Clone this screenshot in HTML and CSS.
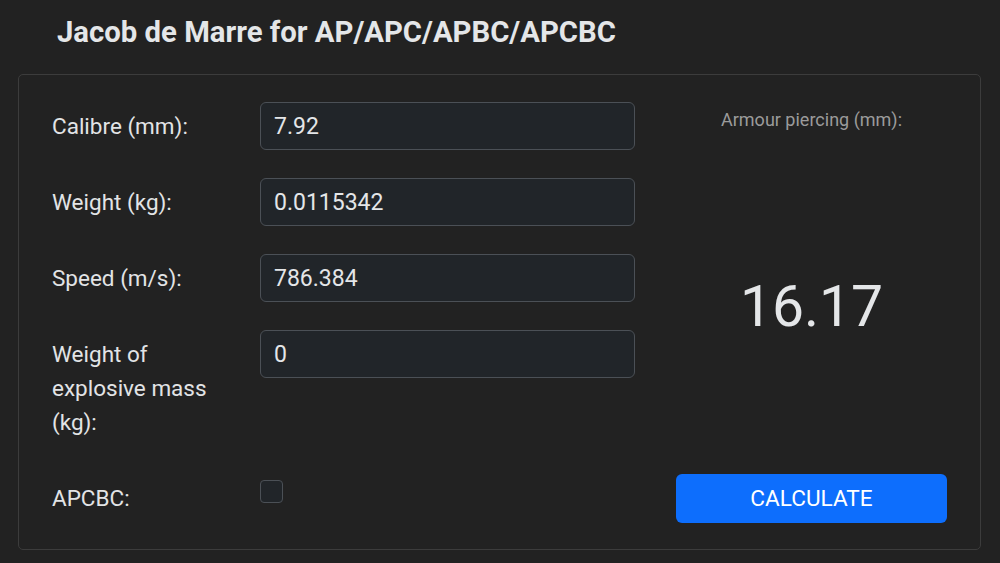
FILE: index.html
```html
<!DOCTYPE html>
<html>
<head>
<meta charset="utf-8">
<link rel="stylesheet" href="styles.css">
</head>
<body>
<h1 class="title">Jacob de Marre for AP/APC/APBC/APCBC</h1>
<div class="card">
  <label class="label" for="cal">Calibre (mm):</label>
  <input class="field" id="cal" type="text" value="7.92">
  <div class="result-col">
    <div class="result-label">Armour piercing (mm):</div>
    <div class="result-value">16.17</div>
  </div>

  <label class="label" for="w">Weight (kg):</label>
  <input class="field" id="w" type="text" value="0.0115342">

  <label class="label" for="s">Speed (m/s):</label>
  <input class="field" id="s" type="text" value="786.384">

  <label class="label" for="e">Weight of explosive mass (kg):</label>
  <input class="field" id="e" type="text" value="0">

  <label class="label" for="c">APCBC:</label>
  <div class="check-cell"><span class="check" id="c"></span></div>
  <button class="btn">CALCULATE</button>
</div>
</body>
</html>
```
FILE: styles.css
```css
html, body {
  margin: 0;
  padding: 0;
  background: #222222;
  font-family: Roboto, "Liberation Sans", sans-serif;
  color: #dee2e6;
}
.title {
  margin: 0;
  padding: 13px 0 0 57px;
  height: 60px;
  box-sizing: border-box;
  font-size: 29.3px;
  font-weight: 700;
  line-height: 38px;
  color: #e4e6e8;
}
.card {
  margin: 14px 0 0 18px;
  width: 963px;
  box-sizing: border-box;
  border: 1px solid #3c3c3c;
  border-radius: 5px;
  padding: 27px 33px 26px 33px;
  display: grid;
  grid-template-columns: 208px 375px 1fr;
  grid-template-rows: auto auto auto auto auto;
  row-gap: 28px;
  align-items: start;
}
.label {
  font-size: 22.5px;
  line-height: 34px;
  padding: 7px 0;
  color: #e2e4e6;
  width: 170px;
}
.field {
  grid-column: 2;
  height: 48px;
  box-sizing: border-box;
  margin: 0;
  padding: 0 13px;
  background: #212529;
  border: 1px solid #4b5056;
  border-radius: 6px;
  color: #e4e6e8;
  font-family: Roboto, "Liberation Sans", sans-serif;
  font-size: 23px;
  outline: none;
  width: 375px;
}
.result-col {
  grid-column: 3;
  grid-row: 1 / span 4;
  margin-left: 41px;
  display: flex;
  flex-direction: column;
  align-items: center;
}
.result-label {
  margin-top: 7px;
  font-size: 18px;
  line-height: 22px;
  color: #9b9b9b;
}
.result-value {
  margin-top: 142px;
  font-size: 57px;
  line-height: 68px;
  color: #e4e6e8;
}
.check-cell {
  grid-column: 2;
  padding-top: 6px;
}
.check {
  display: block;
  width: 23px;
  height: 23px;
  box-sizing: border-box;
  background: #212529;
  border: 1px solid #4b5056;
  border-radius: 4px;
}
.btn {
  grid-column: 3;
  margin-left: 41px;
  height: 49px;
  border: none;
  border-radius: 6px;
  background: #0d6efd;
  color: #ffffff;
  font-family: Roboto, "Liberation Sans", sans-serif;
  font-size: 22.6px;
  padding: 0;
}
```
